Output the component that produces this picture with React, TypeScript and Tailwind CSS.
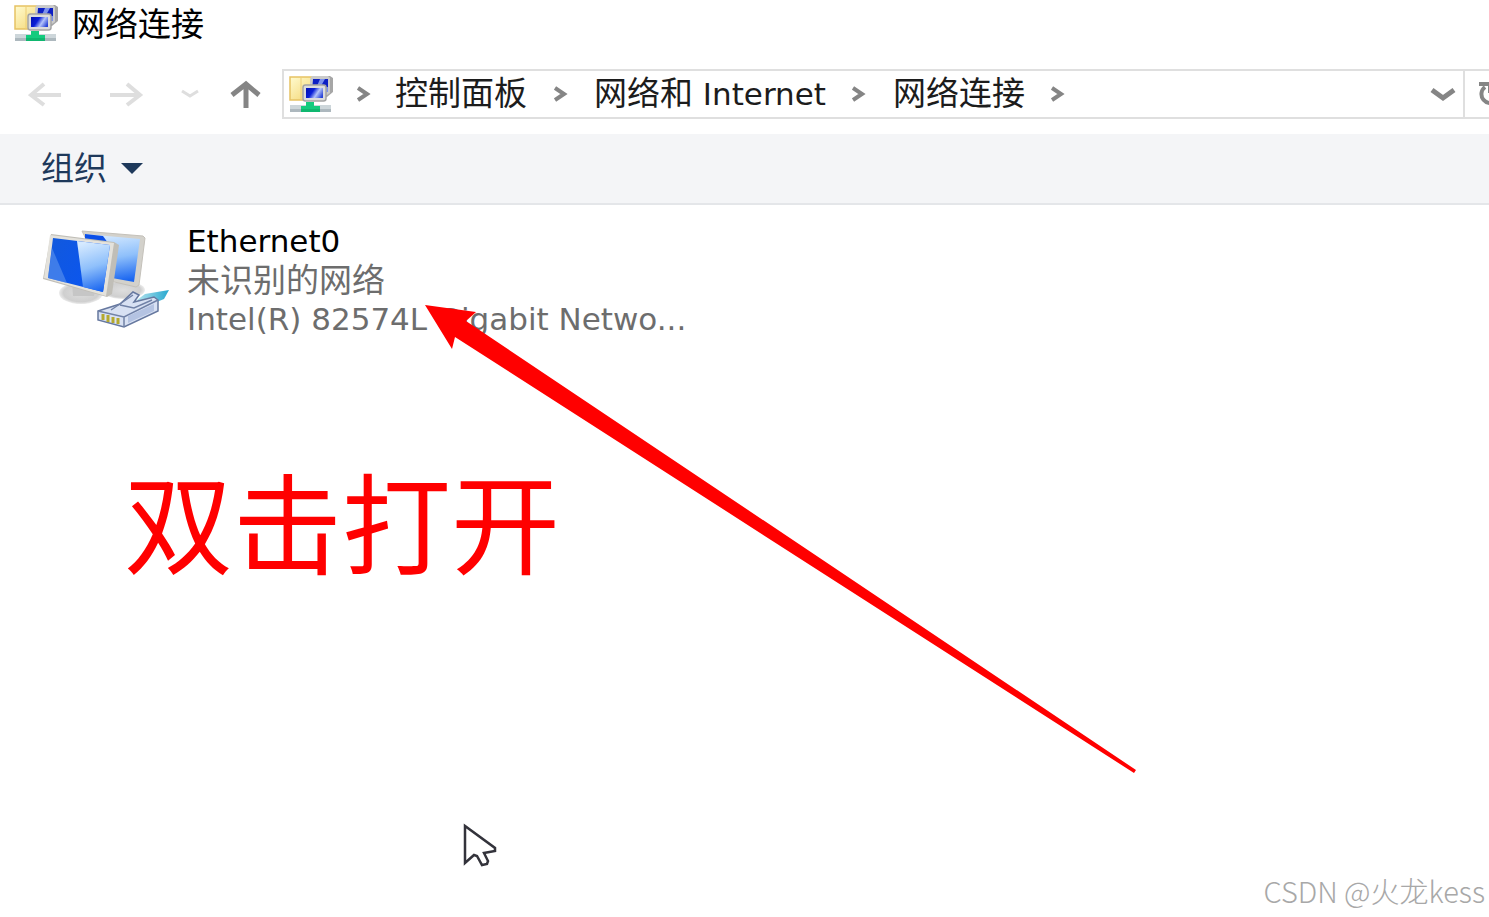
import { Fragment } from "react";

const crumbs = [
  { zh: "控制面板", en: "" },
  { zh: "网络和", en: "Internet" },
  { zh: "网络连接", en: "" },
];

function NetworkFolderIcon() {
  return (
    <svg viewBox="0 0 44 38" className="h-[38px] w-11 shrink-0" aria-hidden="true">
      <defs>
        <linearGradient id="folder" x1="0" x2="1" y1="0" y2="1">
          <stop offset="0" stopColor="#fffbd0" />
          <stop offset="1" stopColor="#f3d36c" />
        </linearGradient>
        <linearGradient id="smallScreen" x1="0" x2="1" y1="0.3" y2="0.7">
          <stop offset="0" stopColor="#0412b8" />
          <stop offset="0.35" stopColor="#0a1fd8" />
          <stop offset="0.65" stopColor="#b4c4fa" />
          <stop offset="1" stopColor="#2a44d8" />
        </linearGradient>
      </defs>
      <rect x="1" y="2" width="26" height="23" fill="url(#folder)" stroke="#e6c263" strokeWidth="1.5" />
      <path d="M12 2v23" stroke="#edce75" />
      <path d="M24 1h17l3 2v14l-6 5H24z" fill="#a6a6a6" />
      <path d="M23 1h16l2 2v15l-3 2H21V4z" fill="#cacaca" />
      <path d="M24 4h15v13H23z" fill="#0d1fc4" />
      <path d="M31 4h5l-4 7h-4zM36 12h3v5h-3z" fill="#7d92ec" />
      <rect x="14" y="10" width="23" height="16" rx="2.5" fill="#dcdcdc" stroke="#a4a4a4" strokeWidth="1.5" />
      <rect x="17" y="13" width="17" height="10" fill="url(#smallScreen)" />
      <path d="M1 30h41v7H1z" fill="#cdd6da" />
      <path d="M1 34h41v3H1z" fill="#adb8be" />
      <path d="M17 27h8v4h6v6H12v-6h5z" fill="#14cb7e" />
      <path d="M12 34h19v3H12z" fill="#0fb76f" />
    </svg>
  );
}

function EthernetIcon() {
  return (
    <svg viewBox="0 0 130 102" className="h-[102px] w-[130px] shrink-0" aria-hidden="true">
      <defs>
        <linearGradient id="blueScreen" x1="0" x2="1" y1="0" y2="0.5">
          <stop offset="0" stopColor="#1259dc" />
          <stop offset="1" stopColor="#0a55f2" />
        </linearGradient>
        <linearGradient id="glare" x1="0.4" x2="0.6" y1="0" y2="1">
          <stop offset="0" stopColor="#d6eaff" />
          <stop offset="0.5" stopColor="#8fc0fb" />
          <stop offset="1" stopColor="#1a66f0" />
        </linearGradient>
        <radialGradient id="stand">
          <stop offset="0" stopColor="#dedede" />
          <stop offset="0.8" stopColor="#cfcfcf" />
          <stop offset="1" stopColor="#ececec" />
        </radialGradient>
        <linearGradient id="cable" x1="0" x2="1">
          <stop offset="0" stopColor="#b5e3ee" />
          <stop offset="1" stopColor="#25a8cf" />
        </linearGradient>
      </defs>
      <ellipse cx="80" cy="60" rx="22" ry="9" fill="url(#stand)" />
      <path d="M39 1l61 5 2 2-6 47-3 2-30-7z" fill="#d3d1cb" stroke="#c4c1ba" />
      <path d="M42 4l55 5-6 43-22-4z" fill="url(#glare)" />
      <path d="M42 4l18 2 5 7-23-4z" fill="#0b4fe8" />
      <ellipse cx="38" cy="63" rx="22" ry="11" fill="url(#stand)" />
      <path d="M29 52l24 4-2 10H30z" fill="#c6c6c6" />
      <path d="M8 4l63 8 5 3-7 49-5 3L0 49z" fill="#c0beb7" />
      <path d="M7 5l64 8-8 53L1 48z" fill="#e4e2dc" />
      <path d="M10 8l57 7-7 47-55-14z" fill="url(#blueScreen)" />
      <path d="M34 11l33 4-7 47-20-5z" fill="url(#glare)" />
      <path d="M9 18l15 35-19-5z" fill="#5d94ee" opacity=".6" />
      <path d="M94 70l8-6 24-4-5 9-17 7z" fill="url(#cable)" />
      <path d="M55 81l22-7 13-12 6 3-5 7 20-5 4 3v11L81 97l-26-7z" fill="#d8e1f3" stroke="#66789f" strokeWidth="1.5" />
      <path d="M55 81l26 6 34-17M81 87v10M77 75l14 3 18-8M68 80l22-15" fill="none" stroke="#7182a7" strokeWidth="1.5" />
      <path d="M85 86l26-12v7L85 93z" fill="#b4c3e2" />
      <path d="M60 84v6M65 85v7M70 87v6M75 88v6" stroke="#b5a92f" strokeWidth="3" />
    </svg>
  );
}

function CrumbChevron() {
  return (
    <svg viewBox="0 0 14 16" className="h-4 w-3.5 shrink-0" fill="none" stroke="#858585" strokeWidth="4" aria-hidden="true">
      <path d="M1 2l9 6-9 6" />
    </svg>
  );
}

function NavBar() {
  return (
    <nav className="flex h-[50px] items-center pl-7">
      <button type="button" aria-label="返回" disabled>
        <svg viewBox="0 0 34 26" className="h-[26px] w-[34px]" fill="none" stroke="#dedede" strokeWidth="4">
          <path d="M33 14H3M16 3L3 14l13 10" />
        </svg>
      </button>
      <button type="button" aria-label="前进" disabled className="ml-12">
        <svg viewBox="0 0 34 26" className="h-[26px] w-[34px]" fill="none" stroke="#dedede" strokeWidth="4">
          <path d="M0 14h31M17 3l13 11-13 10" />
        </svg>
      </button>
      <button type="button" aria-label="最近浏览的位置" disabled className="ml-9">
        <svg viewBox="0 0 20 10" className="h-2.5 w-5" fill="none" stroke="#dedede" strokeWidth="3">
          <path d="M2 2l8 5 8-5" />
        </svg>
      </button>
      <button type="button" aria-label="上移" className="ml-7">
        <svg viewBox="0 0 34 28" className="h-7 w-[34px]" fill="none" stroke="#858585" strokeWidth="5">
          <path d="M18 28V5M4 15L18 4l13 11" />
        </svg>
      </button>
      <div className="ml-5 flex h-full min-w-0 flex-1 items-center border-2 border-[#dfdfdf] pl-[5px]">
        <NetworkFolderIcon />
        <span className="flex w-[62px] justify-center">
          <CrumbChevron />
        </span>
        {crumbs.map(({ zh, en }) => (
          <Fragment key={zh}>
            <button type="button" className="shrink-0 whitespace-nowrap leading-[46px]">
              {zh}
              {en && <span className="text-[31px]"> {en}</span>}
            </button>
            <span className="flex w-[67px] shrink-0 justify-center">
              <CrumbChevron />
            </span>
          </Fragment>
        ))}
        <button type="button" aria-label="展开地址栏" className="ml-auto mr-1.5 shrink-0">
          <svg viewBox="0 0 28 16" className="h-4 w-7" fill="none" stroke="#858585" strokeWidth="5">
            <path d="M3 4l11 8 11-8" />
          </svg>
        </button>
      </div>
      <button type="button" aria-label="刷新" className="flex h-full w-6 shrink-0 items-center overflow-hidden border-y-2 border-[#dfdfdf] pl-3">
        <svg viewBox="0 0 28 28" className="h-7 w-7 shrink-0" fill="none" stroke="#858585" strokeWidth="4">
          <path d="M2 4h11v9M8 7a9 9 0 1 0 12 1" />
        </svg>
      </button>
    </nav>
  );
}

export default function App() {
  return (
    <div className="relative flex min-h-screen flex-col overflow-hidden bg-white font-['DejaVu_Sans','Noto_Sans_CJK_SC',sans-serif] text-[33px] text-[#1c1c1c]">
      <header className="flex h-[69px] items-start gap-3.5 pl-3.5 pt-1">
        <NetworkFolderIcon />
        <h1 className="leading-[42px] text-black">网络连接</h1>
      </header>

      <NavBar />

      <div className="mt-[15px] flex h-[71px] items-center border-b-2 border-[#e4e6e9] bg-[#f4f5f7] pl-[41px]">
        <button type="button" className="flex items-center gap-3.5 text-[#1e395b]">
          组织
          <svg viewBox="0 0 22 11" className="h-[11px] w-[22px]" fill="#1e395b" aria-hidden="true">
            <path d="M0 0h22L11 11z" />
          </svg>
        </button>
      </div>

      <main className="flex-1">
        <button type="button" className="flex gap-3.5 pl-[43px] pt-[17px] text-left">
          <span className="pt-2">
            <EthernetIcon />
          </span>
          <span className="flex flex-col leading-[39px] text-[#6d6d6d]">
            <span className="text-[31px] text-black">Ethernet0</span>
            <span>未识别的网络</span>
            <span className="text-[31px]">Intel(R) 82574L Gigabit Netwo...</span>
          </span>
        </button>
        <p className="pl-[124px] pt-[118px] text-[109px] leading-[144px] text-[#ff0000]">双击打开</p>
      </main>

      {/* 指向网卡的箭头 */}
      <svg viewBox="0 0 712 470" className="pointer-events-none absolute left-[425px] top-[304px] h-[470px] w-[712px]" aria-hidden="true">
        <path d="M0 1l51 7-10 9 670 449-2 3L30 33l-3 12z" fill="#ff0000" />
      </svg>

      {/* 鼠标指针 */}
      <svg viewBox="0 0 36 44" className="pointer-events-none absolute left-[462px] top-[823px] h-11 w-9" aria-hidden="true">
        <path d="M3 3v37l9-8 3 1 5 9 5-1 1-3-4-8 11-2v-3z" fill="#fff" stroke="#33333b" strokeWidth="2.5" />
      </svg>

      <span className="absolute bottom-1.5 right-1 font-['Noto_Sans_CJK_SC',sans-serif] text-[29px] font-light leading-[42px] text-[#a8a8a8]">
        CSDN @火龙kess
      </span>
    </div>
  );
}
